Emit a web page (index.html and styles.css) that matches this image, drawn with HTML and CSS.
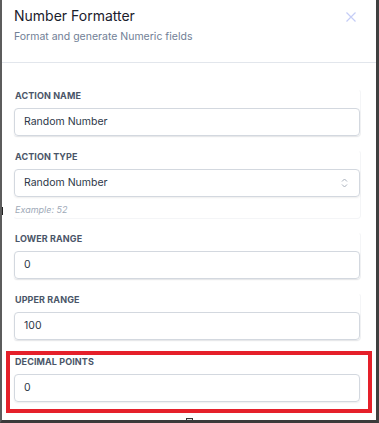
FILE: index.html
```html
<!DOCTYPE html>
<html>
<head>
<meta charset="utf-8">
<link rel="stylesheet" href="styles.css">
</head>
<body>
<div class="panel">
  <header class="head">
    <div class="titles">
      <h1 class="title">Number Formatter</h1>
      <p class="subtitle">Format and generate Numeric fields</p>
    </div>
    <svg class="close" width="10" height="10" viewBox="0 0 10 10"><path d="M0.5 0.5L9.5 9.5M9.5 0.5L0.5 9.5" stroke="#c5cdf6" stroke-width="1.2" fill="none"/></svg>
  </header>
  <div class="body">
    <div class="group">
      <label class="label">ACTION NAME</label>
      <div class="input">Random Number</div>
    </div>
    <div class="group">
      <label class="label">ACTION TYPE</label>
      <div class="input select">
        <span>Random Number</span>
        <svg class="chev" width="7" height="10" viewBox="0 0 7 10"><path d="M1 3.5L3.5 1L6 3.5M1 6.5L3.5 9L6 6.5" stroke="#a9b1bd" stroke-width="1" fill="none"/></svg>
      </div>
      <p class="hint">Example: 52</p>
    </div>
    <div class="group">
      <label class="label">LOWER RANGE</label>
      <div class="input">0</div>
    </div>
    <div class="group">
      <label class="label">UPPER RANGE</label>
      <div class="input">100</div>
    </div>
    <div class="highlight">
      <div class="group plain">
        <label class="label">DECIMAL POINTS</label>
        <div class="input">0</div>
      </div>
    </div>
  </div>
  <span class="handle left"></span>
  <span class="handle right"></span>
  <span class="grip"></span>
</div>
</body>
</html>
```
FILE: styles.css
```css
* { box-sizing: border-box; }
html, body { margin: 0; padding: 0; background: #fff; }
body { font-family: Inter, "Noto Sans", sans-serif; color: #1a202c; }
.panel {
  position: relative;
  width: 379px;
  height: 423px;
  border-left: 2px solid #5c5c5c;
  border-right: 3px solid #3f3f3f;
  border-bottom: 3px solid #3a3a3a;
  overflow: hidden;
}
.head {
  display: flex;
  justify-content: space-between;
  align-items: flex-start;
  padding: 7px 20px 0 12px;
  height: 63px;
  border-bottom: 1px solid #e2e6ec;
}
.title {
  margin: 0;
  font-size: 14px;
  line-height: 18px;
  font-weight: 400;
  color: #1a202c;
}
.subtitle {
  margin: 5px 0 0;
  font-size: 10.5px;
  line-height: 13px;
  color: #718096;
}
.close { margin-top: 5px; }
.body {
  display: flex;
  flex-direction: column;
  gap: 13px;
  padding: 26px 15px 0 12px;
}
.group {
  display: flex;
  flex-direction: column;
  border: 1px solid transparent;
  border-right-color: #f4f5f7;
  border-bottom-color: #f4f5f7;
  border-radius: 4px;
  margin-left: -1px;
}
.group.plain { border-color: transparent; }
.label {
  font-size: 9px;
  line-height: 12px;
  font-weight: 700;
  color: #4a5568;
  margin-bottom: 6px;
  letter-spacing: 0.1px;
  padding-left: 1px;
}
.input {
  height: 28px;
  border: 1px solid #d3d8df;
  border-radius: 4px;
  box-shadow: 0 1px 2px rgba(0,0,0,0.07);
  font-size: 10.5px;
  line-height: 26px;
  padding: 0 9px;
  color: #2d3748;
}
.select {
  display: flex;
  justify-content: space-between;
  align-items: center;
  padding-right: 11px;
}
.hint {
  margin: 7px 0 2px;
  font-size: 9px;
  line-height: 12px;
  font-style: italic;
  color: #a0aab8;
  padding-left: 1px;
}
.highlight {
  margin: -3px -11px 0 -8px;
  border: 4px solid #e5202a;
  padding: 0 7px 6px 4px;
}
.handle {
  position: absolute;
  top: 207px;
  width: 3px;
  height: 8px;
  background: #222;
}
.handle.left { left: -2px; }
.handle.right { right: -3px; }
.grip {
  position: absolute;
  bottom: -3px;
  left: 184px;
  width: 7px;
  height: 5px;
  border: 1px solid #333;
  background: #ddd;
}
```
